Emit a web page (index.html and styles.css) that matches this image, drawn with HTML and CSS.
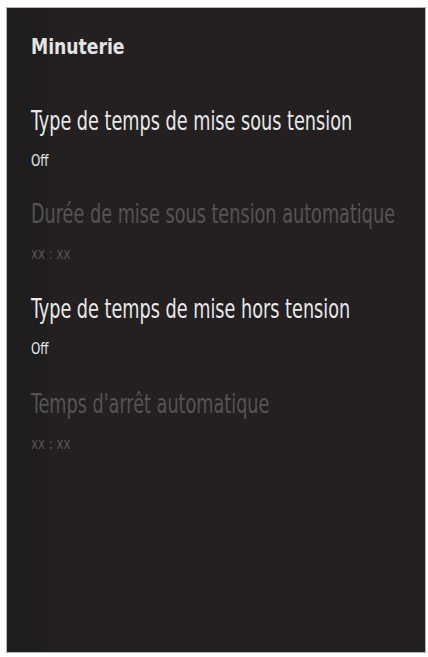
FILE: index.html
```html
<!DOCTYPE html>
<html lang="fr">
<head>
<meta charset="utf-8">
<title>Minuterie</title>
<link rel="stylesheet" href="styles.css">
</head>
<body>
<div class="panel">
  <h1 class="title">Minuterie</h1>
  <ul class="list">
    <li class="item">
      <div class="label">Type de temps de mise sous tension</div>
      <div class="value">Off</div>
    </li>
    <li class="item disabled">
      <div class="label">Durée de mise sous tension automatique</div>
      <div class="value">xx : xx</div>
    </li>
    <li class="item">
      <div class="label">Type de temps de mise hors tension</div>
      <div class="value">Off</div>
    </li>
    <li class="item disabled">
      <div class="label">Temps d'arrêt automatique</div>
      <div class="value">xx : xx</div>
    </li>
  </ul>
</div>
</body>
</html>
```

FILE: styles.css
```css
html, body {
  margin: 0;
  padding: 0;
  background: #ffffff;
}
body {
  padding: 7px 2px 4px 6px;
  font-family: "DejaVu Sans Condensed", "DejaVu Sans", sans-serif;
}
.panel {
  box-sizing: border-box;
  width: 420px;
  height: 646px;
  overflow: hidden;
  border: 1px solid #b4b4b4;
  background: linear-gradient(to right, #1f1d1e 0, #1f1d1e 40px, #242021 40px, #242021 100%);
  padding: 26px 0 0 24px;
}
.title {
  margin: 0;
  font-size: 22px;
  font-weight: bold;
  color: #e4e4e4;
  line-height: 25px;
  white-space: nowrap;
  transform: scaleX(0.87);
  transform-origin: left center;
}
.list {
  list-style: none;
  margin: 47px 0 0 0;
  padding: 0;
}
.item {
  height: 95px;
}
.label {
  font-size: 27px;
  line-height: 30px;
  color: #e8e8e8;
  white-space: nowrap;
  transform: scaleX(0.727);
  transform-origin: left center;
}
.value {
  margin-top: 15px;
  font-size: 16.5px;
  line-height: 20px;
  color: #e8e8e8;
  white-space: nowrap;
  transform: scaleX(0.8);
  transform-origin: left center;
}
.item.disabled:nth-child(2) .label {
  margin-top: -2px;
  margin-bottom: 2px;
}
.disabled .label,
.disabled .value {
  color: #555353;
}
```
